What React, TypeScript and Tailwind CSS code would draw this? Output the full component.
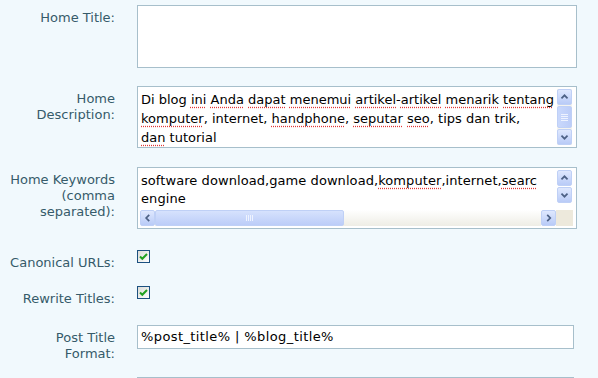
import React from "react";

const labelCls =
  "w-[115px] shrink-0 text-right text-[13px] leading-[16px] text-[#365b6a] pt-[5px]";

function Sp({ children }: { children: React.ReactNode }) {
  return (
    <span className="underline decoration-dotted decoration-[#e03838] underline-offset-[3px]">
      {children}
    </span>
  );
}

function Arrow({ dir }: { dir: "up" | "down" | "left" | "right" }) {
  const d = {
    up: "M4 9.5 L7.5 6 L11 9.5",
    down: "M4 6.5 L7.5 10 L11 6.5",
    left: "M9.5 4.5 L6 8 L9.5 11.5",
    right: "M6 4.5 L9.5 8 L6 11.5",
  }[dir];
  return (
    <svg width="15" height="16" viewBox="0 0 15 16">
      <path d={d} fill="none" stroke="#4d6185" strokeWidth="2" />
    </svg>
  );
}

function ScrollBtn({ dir }: { dir: "up" | "down" | "left" | "right" }) {
  return (
    <div className="w-[15px] h-[16px] shrink-0 rounded-[2px] border border-[#bfd0f6] bg-linear-to-b from-[#dfe8fe] to-[#b9cbf7] flex items-center justify-center">
      <Arrow dir={dir} />
    </div>
  );
}

function Row({
  label,
  h,
  children,
  pt = "pt-[5px]",
}: {
  label: React.ReactNode;
  h: string;
  children: React.ReactNode;
  pt?: string;
}) {
  return (
    <div className={`flex ${h}`}>
      <div className={`${labelCls} ${pt}`}>{label}</div>
      <div className="ml-[22px]">{children}</div>
    </div>
  );
}

function CheckBox() {
  return (
    <div className="w-[13px] h-[13px] border border-[#1c5180] bg-linear-to-br from-[#dcdcd7] to-white flex items-center justify-center">
      <svg width="11" height="11" viewBox="0 0 11 11">
        <path d="M2 5.5 L4.3 7.8 L9 3" fill="none" stroke="#21a121" strokeWidth="2" />
      </svg>
    </div>
  );
}

export default function App() {
  return (
    <div className="h-[378px] w-[598px] overflow-hidden bg-[#f1f9fd] font-['DejaVu_Sans',Verdana,sans-serif]">
      <div className="pt-[5px]">
        <Row label="Home Title:" h="h-[81px]">
          <div className="w-[440px] h-[63px] border border-[#a7bfcb] bg-white" />
        </Row>

        <Row
          label={
            <>
              Home
              <br />
              Description:
            </>
          }
          h="h-[81px]"
        >
          <div className="w-[440px] h-[62px] border border-[#a7bfcb] bg-white flex">
            <div className="flex-1 pl-[3px] pt-[3px] text-[13px] leading-[19px] text-black whitespace-nowrap overflow-hidden">
              <div>
                Di blog <Sp>ini</Sp> <Sp>Anda</Sp> <Sp>dapat</Sp> <Sp>menemui</Sp>{" "}
                <Sp>artikel</Sp>-<Sp>artikel</Sp> <Sp>menarik</Sp> <Sp>tentang</Sp>
              </div>
              <div>
                <Sp>komputer</Sp>, internet, <Sp>handphone</Sp>, <Sp>seputar</Sp>{" "}
                <Sp>seo</Sp>, tips dan trik,
              </div>
              <div>
                <Sp>dan</Sp> tutorial
              </div>
            </div>
            <div className="w-[15px] mr-[4px] my-[2px] flex flex-col bg-[#f4f3ee]">
              <ScrollBtn dir="up" />
              <div className="flex-1 py-[1px]">
                <div className="h-full rounded-[2px] border border-[#bfd0f6] bg-linear-to-r from-[#c9d8fc] to-[#bccdf8] flex flex-col items-center justify-center gap-[1px]">
                  <div className="w-[7px] h-px bg-[#eef3ff]" />
                  <div className="w-[7px] h-px bg-[#eef3ff]" />
                  <div className="w-[7px] h-px bg-[#eef3ff]" />
                  <div className="w-[7px] h-px bg-[#eef3ff]" />
                </div>
              </div>
              <ScrollBtn dir="down" />
            </div>
          </div>
        </Row>

        <Row
          label={
            <>
              Home Keywords
              <br />
              (comma
              <br />
              separated):
            </>
          }
          h="h-[83px]"
        >
          <div className="w-[440px] h-[62px] border border-[#a7bfcb] bg-white flex flex-col">
            <div className="h-[42px] flex">
              <div className="flex-1 pl-[3px] pt-[4px] text-[13px] leading-[18px] text-black whitespace-nowrap overflow-hidden tracking-[0.07px]">
                <div>
                  software download,game download,<Sp>komputer</Sp>,internet,<Sp>searc</Sp>
                </div>
                <div>engine</div>
              </div>
              <div className="w-[15px] mr-[4px] pt-[2px] flex flex-col gap-[1px]">
                <ScrollBtn dir="up" />
                <ScrollBtn dir="down" />
              </div>
            </div>
            <div className="h-[16px] flex ml-[2px] mr-[3px]">
              <ScrollBtn dir="left" />
              <div className="flex-1 flex bg-linear-to-b from-white to-[#eeede5]">
                <div className="w-[189px] h-full rounded-[2px] border border-[#bfd0f6] bg-linear-to-b from-[#d6e2fd] to-[#bccdf8] flex items-center justify-center gap-[1px]">
                  <div className="w-px h-[6px] bg-[#eef3ff]" />
                  <div className="w-px h-[6px] bg-[#eef3ff]" />
                  <div className="w-px h-[6px] bg-[#eef3ff]" />
                  <div className="w-px h-[6px] bg-[#eef3ff]" />
                </div>
              </div>
              <ScrollBtn dir="right" />
              <div className="w-[17px] bg-[#ede9dc]" />
            </div>
          </div>
        </Row>

        <Row label="Canonical URLs:" h="h-[36px]" pt="pt-[4px]">
          <CheckBox />
        </Row>

        <Row label="Rewrite Titles:" h="h-[39px]" pt="pt-[3px]">
          <CheckBox />
        </Row>

        <Row
          label={
            <>
              Post Title
              <br />
              Format:
            </>
          }
          h="h-[52px]"
        >
          <div className="w-[437px] h-[24px] border border-[#a7bfcb] bg-white pl-[3px] text-[13px] leading-[22px] text-black whitespace-pre tracking-[0.4px]">
            %post_title% | %blog_title%
          </div>
        </Row>

        <Row label="" h="h-[30px]">
          <div className="w-[437px] h-[24px] border border-[#a7bfcb] bg-white" />
        </Row>
      </div>
    </div>
  );
}
